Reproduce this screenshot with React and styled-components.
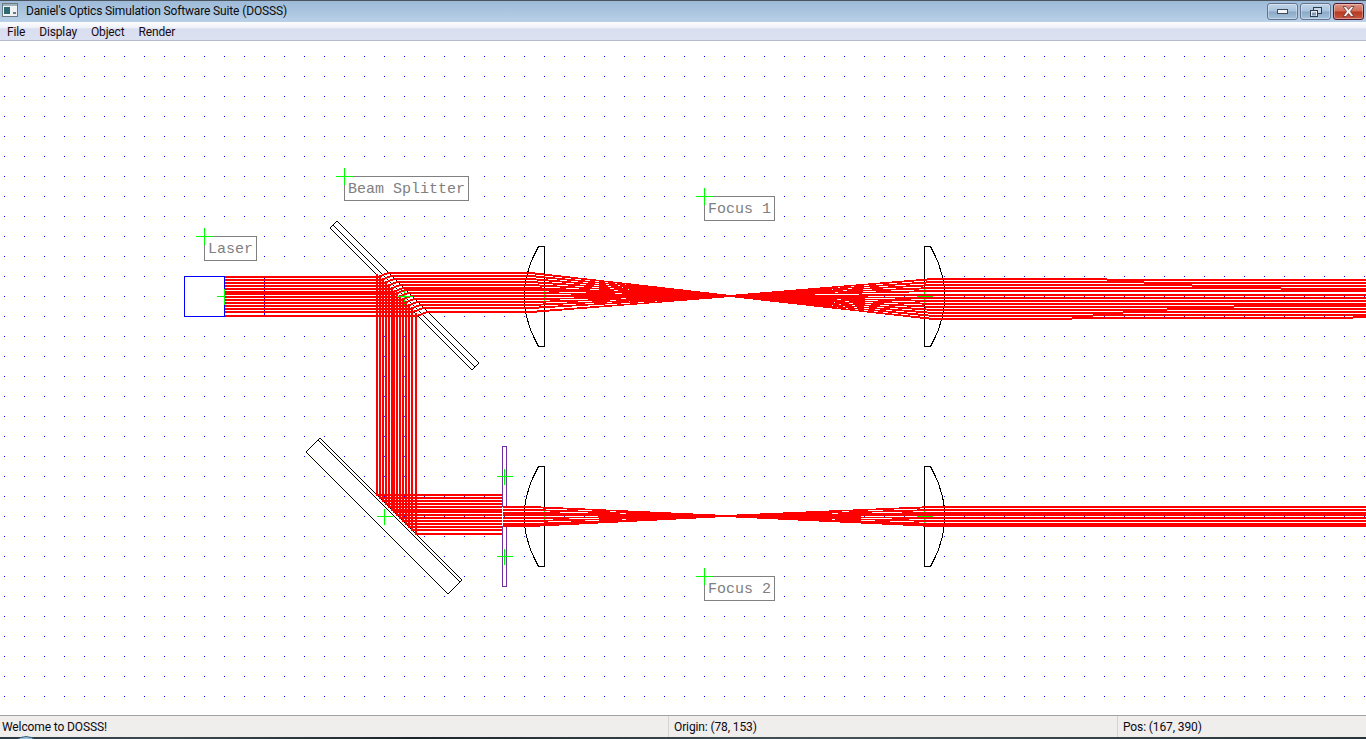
import React from "react";
import styled, { createGlobalStyle } from "styled-components";

const GlobalStyle = createGlobalStyle`
  html, body { margin: 0; padding: 0; background: #fff; overflow: hidden; }
  body { font-family: Roboto, "Noto Sans", sans-serif; font-size: 12px; color: #000; }
`;

const Window = styled.div`
  width: 1366px;
  height: 739px;
  display: flex;
  flex-direction: column;
  overflow: hidden;
`;

const TitleBar = styled.div`
  height: 22px;
  box-sizing: border-box;
  flex: none;
  display: flex;
  align-items: flex-start;
  border-top: 1px solid #4a5560;
  background: linear-gradient(180deg, #9dbad8 0%, #b9d0e8 100%);
`;

const AppIcon = styled.svg`
  width: 16px;
  height: 14px;
  flex: none;
  margin: 2px 8px 0 2px;
`;

const Title = styled.div`
  flex: 1;
  line-height: 20px;
  font-size: 12px;
  letter-spacing: -0.14px;
  color: #0c0c0c;
  white-space: nowrap;
`;

const Caption = styled.div`
  display: flex;
  gap: 2px;
  margin: 2px 2px 0 0;
`;

const CaptionButton = styled.div`
  width: 31px;
  height: 17px;
  box-sizing: border-box;
  display: flex;
  align-items: center;
  justify-content: center;
  border: 1px solid ${(p) => (p.$close ? "#4d1830" : "#62748f")};
  border-radius: 3px;
  background: ${(p) =>
    p.$close
      ? "linear-gradient(180deg, #dc9484 0%, #cf6c58 48%, #b9361f 52%, #c55a44 100%)"
      : "linear-gradient(180deg, #c0d4e8 0%, #a9c3dd 48%, #8aa8c6 52%, #a6c2dc 100%)"};
  box-shadow: inset 0 0 0 1px rgba(255, 255, 255, 0.35);
`;

const MenuBar = styled.div`
  height: 19px;
  box-sizing: border-box;
  flex: none;
  display: flex;
  padding-left: 7px;
  gap: 14px;
  border-bottom: 1px solid #b3bbcc;
  background: linear-gradient(180deg, #fcfdff 0%, #eff2f9 30%, #d9dff0 38%, #dbe1f1 100%);
`;

const MenuItem = styled.span`
  line-height: 20px;
  font-size: 12px;
  letter-spacing: -0.15px;
  color: #1a0a14;
`;

const Canvas = styled.div`
  flex: 1;
  position: relative;
  background: #fff;
  overflow: hidden;
`;

const Drawing = styled.svg`
  display: block;
  width: 1366px;
  height: 674px;
`;

// the little green cross of a label sits on its top left corner
const Label = styled.div`
  position: absolute;
  left: ${(p) => p.$x}px;
  top: ${(p) => p.$y - 41}px;
  box-sizing: border-box;
  height: 25px;
  padding: 0 3px;
  border: 1px solid #808080;
  background: #fff;
  font-family: "Liberation Mono", monospace;
  font-size: 15px;
  line-height: 26px;
  color: #808080;
  white-space: pre;

  &::before {
    content: "";
    position: absolute;
    left: -9px;
    top: -1px;
    width: 17px;
    height: 1px;
    background: #00ff00;
  }

  &::after {
    content: "";
    position: absolute;
    left: -1px;
    top: -9px;
    width: 1px;
    height: 17px;
    background: #00ff00;
  }
`;

const StatusBar = styled.div`
  height: 22px;
  flex: none;
  box-sizing: border-box;
  display: grid;
  grid-template-columns: 668px 449px 1fr;
  border-top: 1px solid #a2a2a2;
  background: #f0eded;
`;

const StatusPane = styled.div`
  line-height: 23px;
  padding-left: ${(p) => (p.$first ? 2 : 5)}px;
  font-size: 12px;
  letter-spacing: -0.12px;
  color: #0a0a14;
  border-left: ${(p) => (p.$first ? "none" : "1px solid #d6d3d3")};
  white-space: nowrap;
`;

const Desktop = styled.div`
  height: 2px;
  flex: none;
  position: relative;
  background: linear-gradient(90deg, #2a3a44 0%, #3e4a52 12%, #1b262c 30%, #46525a 60%, #28343c 100%);
`;

const Orb = styled.div`
  position: absolute;
  left: 11px;
  top: -1px;
  width: 28px;
  height: 28px;
  border-radius: 50%;
  border: 1px solid #35607f;
  background: #9cc0d8;
`;

// top pixel row of each 2px ray, measured from the top of its beam
const NEAR_ROWS = [0, 3, 6, 9, 12, 15, 17, 20, 23, 26, 29, 32, 35, 39];
const FAR_ROWS = [0, 3, 6, 9, 12, 16, 19, 22, 25, 28, 31, 34, 37, 40];
const SMALL_ROWS = [0, 3, 6, 8, 11, 14, 17, 19];

const seg = (x1, y1, x2, y2) => `M${x1 + 0.5} ${y1 + 0.5}L${x2 + 0.5} ${y2 + 0.5}`;
const ray = (x1, y1, x2, y2) => `M${x1} ${y1 + 1}L${x2} ${y2 + 1}`;
const column = (x, y1, y2) => `M${x + 1} ${y1}L${x + 1} ${y2 + 2}`;

function upperBeam() {
  let d = "";
  NEAR_ROWS.forEach((o) => {
    // laser up to the splitter
    d += ray(225, 276 + o, 378 + o, 276 + o);
    // inside the splitter
    d += ray(378 + o, 276 + o, 388 + o, 272 + o);
    // on to the lens
    d += ray(388 + o, 272 + o, 530, 272 + o);
    // reflected part
    d += column(376 + o, 274 + o, 494 + o);
    d += ray(376 + o, 494 + o, 502, 494 + o);
  });
  FAR_ROWS.forEach((o) => {
    const far = 278 + o;
    // not quite parallel, so the rows step down towards the right
    d += ray(933, far, 1366, 296 + (far - 296) * 0.93);
  });
  return d;
}

function lowerBeam() {
  let d = "";
  SMALL_ROWS.forEach((o) => {
    d += ray(503, 506 + o, 530, 506 + o);
    d += ray(933, 506 + o, 1366, 516 + (o - 10) * 0.97);
  });
  return d;
}

// each ray is a pair of 1px lines that meet at the focus, so it thins on the way in
function cone(rows, top, focusX, focusY, farRows, farTop) {
  let d = "";
  rows.forEach((o, i) => {
    const t = i / (rows.length - 1);
    const f = focusY + t;
    [0, 1].forEach((k) => {
      d += seg(530, top + o + k, focusX, f);
      d += seg(focusX, f, 933, farTop + farRows[i] + k);
    });
  });
  return d;
}

const BULGE = [[-50, 930], [-40, 935], [-33, 938], [-20, 942], [-8, 944], [8, 944], [20, 942], [33, 938], [40, 935], [50, 930]];

function lensPath(flatX, cy, side) {
  const pts = BULGE.map(([dy, x]) => [side > 0 ? flatX + x - 924 : flatX - (x - 924), cy + dy]);
  const body = pts.map(([x, y]) => `${x + 0.5} ${y + 0.5}`).join("L");
  return `M${flatX + 0.5} ${cy - 49.5}L${body}L${flatX + 0.5} ${cy + 50.5}Z`;
}

function Cross({ x, y }) {
  const d = seg(x - 8, y, x + 8, y) + seg(x, y - 8, x, y + 8);
  return <path d={d} stroke="#00ff00" fill="none" />;
}

function Splitter({ points, inner }) {
  return (
    <g fill="none" stroke="#000">
      <polygon points={points} fill="#fff" />
      <line x1={inner[0]} y1={inner[1]} x2={inner[2]} y2={inner[3]} />
    </g>
  );
}

function OpticsDrawing() {
  return (
    <Drawing viewBox="0 41 1366 674" shapeRendering="crispEdges">
      <defs>
        <pattern id="grid" x="4" y="56" width="20" height="20" patternUnits="userSpaceOnUse">
          <rect width="1" height="1" fill="#0000ff" />
        </pattern>
      </defs>
      <rect x="0" y="41" width="1366" height="674" fill="url(#grid)" />

      <rect x="184.5" y="276.5" width="40" height="40" fill="#fff" stroke="#0000ff" />
      <line x1="264.5" y1="276" x2="264.5" y2="317" stroke="#0000ff" />

      <Splitter points="337,221 330,228 472,370 479,363" inner={[333, 225, 475, 367]} />
      <Splitter points="320,438 306,452 448,594 462,580" inner={[318, 440, 460, 582]} />

      <rect x="502.5" y="446.5" width="4" height="60" fill="#fff" stroke="#702fa0" />
      <rect x="502.5" y="526.5" width="4" height="60" fill="#fff" stroke="#702fa0" />

      <g fill="none" stroke="#000">
        <path d={lensPath(544, 296, -1)} />
        <path d={lensPath(924, 296, 1)} />
        <path d={lensPath(544, 516, -1)} />
        <path d={lensPath(924, 516, 1)} />
      </g>

      <path d={seg(216, 296, 224, 296) + seg(224, 288, 224, 304)} stroke="#00ff00" fill="none" />
      <Cross x={404} y={296} />
      <path d={seg(544, 288, 544, 304)} stroke="#00ff00" fill="none" />
      <path d={seg(544, 508, 544, 524)} stroke="#00ff00" fill="none" />
      <path d={seg(924, 288, 924, 304)} stroke="#00ff00" fill="none" />
      <path d={seg(924, 508, 924, 524)} stroke="#00ff00" fill="none" />
      <Cross x={504} y={476} />
      <Cross x={504} y={556} />
      <Cross x={384} y={516} />

      <path d={upperBeam()} stroke="#ff0000" strokeWidth="2" fill="none" />
      <path d={lowerBeam()} stroke="#ff0000" strokeWidth="2" fill="none" />
      <path d={cone(NEAR_ROWS, 272, 730, 295, FAR_ROWS, 278)} stroke="#ff0000" fill="none" />
      <path d={cone(SMALL_ROWS, 506, 725, 515, SMALL_ROWS, 506)} stroke="#ff0000" fill="none" />

      <path d={seg(916, 296, 932, 296)} stroke="#00ff00" fill="none" />
      <path d={seg(916, 516, 932, 516)} stroke="#00ff00" fill="none" />
      <path d={seg(396, 296, 412, 296)} stroke="#00ff00" fill="none" />
    </Drawing>
  );
}

export default function App() {
  return (
    <Window>
      <GlobalStyle />
      <TitleBar>
        <AppIcon viewBox="0 0 16 14">
          <rect x="0.5" y="0.5" width="15" height="13" fill="#eef2f4" stroke="#6c7a80" />
          <rect x="1" y="1" width="14" height="2" fill="#9fb4bd" />
          <rect x="2" y="4" width="6" height="7" fill="#2f6a72" />
          <rect x="11" y="9" width="3" height="2" fill="#6c7a80" />
        </AppIcon>
        <Title>Daniel's Optics Simulation Software Suite (DOSSS)</Title>
        <Caption>
          <CaptionButton>
            <svg width="11" height="5" viewBox="0 0 11 5">
              <rect x="0.5" y="0.5" width="10" height="4" fill="#f4f6f8" stroke="#3c4a5c" />
            </svg>
          </CaptionButton>
          <CaptionButton>
            <svg width="12" height="10" viewBox="0 0 12 10">
              <rect x="3.5" y="0.5" width="8" height="6" fill="#c8d8e8" stroke="#2f3c4e" />
              <rect x="0.5" y="3.5" width="7" height="6" fill="#e4ecf4" stroke="#2f3c4e" />
              <rect x="2" y="5.5" width="4" height="3" fill="#7f97b0" />
            </svg>
          </CaptionButton>
          <CaptionButton $close>
            <svg width="13" height="11" viewBox="0 0 13 11">
              <path d="M1 0.5H4L6.5 3.5L9 0.5H12L8.5 5.5L12 10.5H9L6.5 7.5L4 10.5H1L4.5 5.5Z" fill="#eee" stroke="#5a2a2a" strokeWidth="0.7" />
            </svg>
          </CaptionButton>
        </Caption>
      </TitleBar>
      <MenuBar>
        <MenuItem>File</MenuItem>
        <MenuItem>Display</MenuItem>
        <MenuItem>Object</MenuItem>
        <MenuItem>Render</MenuItem>
      </MenuBar>
      <Canvas>
        <OpticsDrawing />
        <Label $x={204} $y={236}>Laser</Label>
        <Label $x={344} $y={176}>Beam Splitter</Label>
        <Label $x={704} $y={196}>Focus 1</Label>
        <Label $x={704} $y={576}>Focus 2</Label>
      </Canvas>
      <StatusBar>
        <StatusPane $first>Welcome to DOSSS!</StatusPane>
        <StatusPane>Origin: (78, 153)</StatusPane>
        <StatusPane>Pos: (167, 390)</StatusPane>
      </StatusBar>
      <Desktop>
        <Orb />
      </Desktop>
    </Window>
  );
}
